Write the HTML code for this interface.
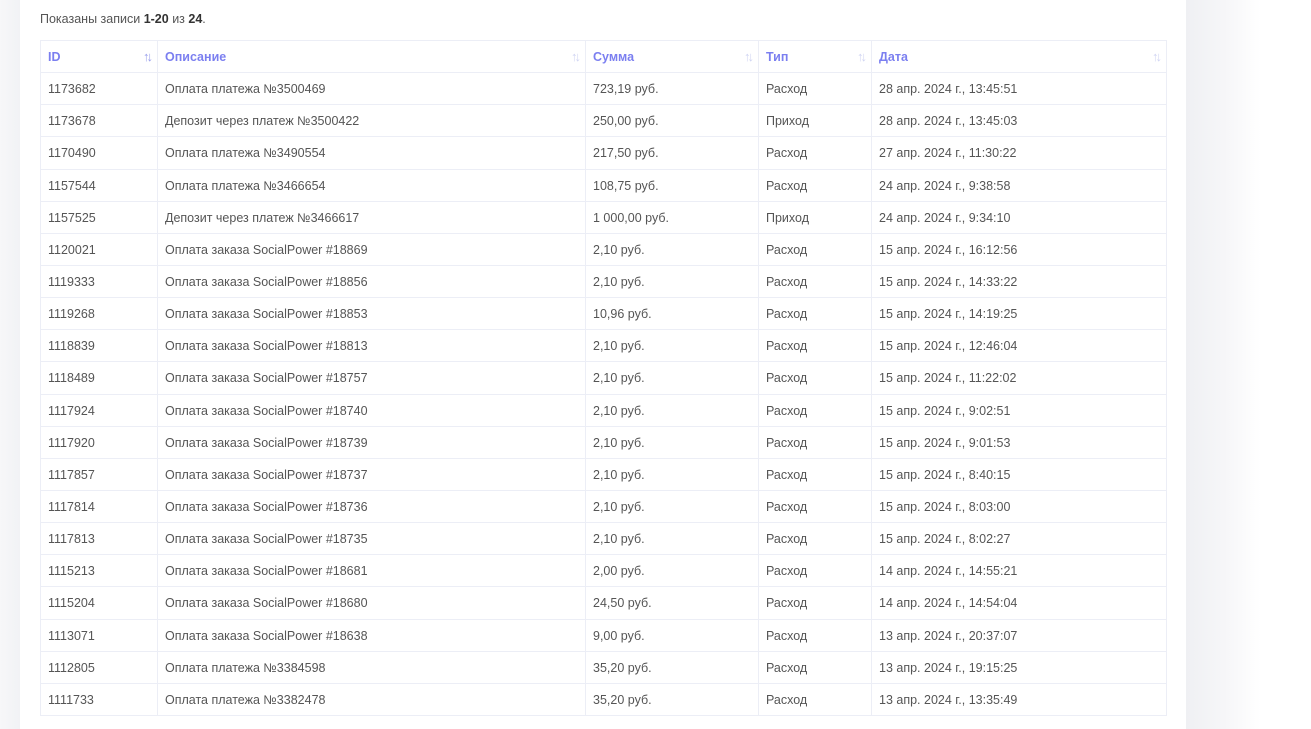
<!DOCTYPE html>
<html><head><meta charset="utf-8"><style>
html,body{margin:0;padding:0;width:1311px;height:729px;overflow:hidden;background:#fff;font-family:"Liberation Sans","DejaVu Sans",sans-serif;}
.bgl{position:absolute;left:0;top:0;width:20px;height:729px;background:linear-gradient(90deg,#f7f7f9,#f1f2f5);}
.bgr{position:absolute;left:1186px;top:0;width:125px;height:729px;background:linear-gradient(90deg,#eff0f3,#f6f6f8 30%,#fff 60%);}
.card{position:absolute;left:20px;top:0;width:1166px;height:729px;background:#fff;}
.info{position:absolute;left:40px;top:12px;font-size:12.5px;color:#555;}
.info b{color:#333;}
table{position:absolute;left:40px;top:40px;width:1126px;border-collapse:collapse;font-size:12.5px;color:#555;table-layout:fixed;}
td,th{border:1px solid #eceef6;height:32.15px;padding:1px 7px 0;text-align:left;white-space:nowrap;box-sizing:border-box;}
th{color:#7b7ff0;font-weight:bold;position:relative;}
th span{position:absolute;right:7px;top:8px;color:#d0d4f2;font-size:13px;font-weight:bold;letter-spacing:-3px;}
th span.a{color:#9aa0ec;}
</style></head><body>
<div class="bgl"></div><div class="bgr"></div>
<div class="card"></div>
<div class="info">Показаны записи <b>1-20</b> из <b>24</b>.</div>
<table>
<colgroup><col style="width:117px"><col style="width:428px"><col style="width:173px"><col style="width:113px"><col style="width:295px"></colgroup>
<tr><th>ID<span class="a">↑↓</span></th><th>Описание<span>↑↓</span></th><th>Сумма<span>↑↓</span></th><th>Тип<span>↑↓</span></th><th>Дата<span>↑↓</span></th></tr>
<tr><td>1173682</td><td>Оплата платежа №3500469</td><td>723,19 руб.</td><td>Расход</td><td>28 апр. 2024 г., 13:45:51</td></tr>
<tr><td>1173678</td><td>Депозит через платеж №3500422</td><td>250,00 руб.</td><td>Приход</td><td>28 апр. 2024 г., 13:45:03</td></tr>
<tr><td>1170490</td><td>Оплата платежа №3490554</td><td>217,50 руб.</td><td>Расход</td><td>27 апр. 2024 г., 11:30:22</td></tr>
<tr><td>1157544</td><td>Оплата платежа №3466654</td><td>108,75 руб.</td><td>Расход</td><td>24 апр. 2024 г., 9:38:58</td></tr>
<tr><td>1157525</td><td>Депозит через платеж №3466617</td><td>1 000,00 руб.</td><td>Приход</td><td>24 апр. 2024 г., 9:34:10</td></tr>
<tr><td>1120021</td><td>Оплата заказа SocialPower #18869</td><td>2,10 руб.</td><td>Расход</td><td>15 апр. 2024 г., 16:12:56</td></tr>
<tr><td>1119333</td><td>Оплата заказа SocialPower #18856</td><td>2,10 руб.</td><td>Расход</td><td>15 апр. 2024 г., 14:33:22</td></tr>
<tr><td>1119268</td><td>Оплата заказа SocialPower #18853</td><td>10,96 руб.</td><td>Расход</td><td>15 апр. 2024 г., 14:19:25</td></tr>
<tr><td>1118839</td><td>Оплата заказа SocialPower #18813</td><td>2,10 руб.</td><td>Расход</td><td>15 апр. 2024 г., 12:46:04</td></tr>
<tr><td>1118489</td><td>Оплата заказа SocialPower #18757</td><td>2,10 руб.</td><td>Расход</td><td>15 апр. 2024 г., 11:22:02</td></tr>
<tr><td>1117924</td><td>Оплата заказа SocialPower #18740</td><td>2,10 руб.</td><td>Расход</td><td>15 апр. 2024 г., 9:02:51</td></tr>
<tr><td>1117920</td><td>Оплата заказа SocialPower #18739</td><td>2,10 руб.</td><td>Расход</td><td>15 апр. 2024 г., 9:01:53</td></tr>
<tr><td>1117857</td><td>Оплата заказа SocialPower #18737</td><td>2,10 руб.</td><td>Расход</td><td>15 апр. 2024 г., 8:40:15</td></tr>
<tr><td>1117814</td><td>Оплата заказа SocialPower #18736</td><td>2,10 руб.</td><td>Расход</td><td>15 апр. 2024 г., 8:03:00</td></tr>
<tr><td>1117813</td><td>Оплата заказа SocialPower #18735</td><td>2,10 руб.</td><td>Расход</td><td>15 апр. 2024 г., 8:02:27</td></tr>
<tr><td>1115213</td><td>Оплата заказа SocialPower #18681</td><td>2,00 руб.</td><td>Расход</td><td>14 апр. 2024 г., 14:55:21</td></tr>
<tr><td>1115204</td><td>Оплата заказа SocialPower #18680</td><td>24,50 руб.</td><td>Расход</td><td>14 апр. 2024 г., 14:54:04</td></tr>
<tr><td>1113071</td><td>Оплата заказа SocialPower #18638</td><td>9,00 руб.</td><td>Расход</td><td>13 апр. 2024 г., 20:37:07</td></tr>
<tr><td>1112805</td><td>Оплата платежа №3384598</td><td>35,20 руб.</td><td>Расход</td><td>13 апр. 2024 г., 19:15:25</td></tr>
<tr><td>1111733</td><td>Оплата платежа №3382478</td><td>35,20 руб.</td><td>Расход</td><td>13 апр. 2024 г., 13:35:49</td></tr>
</table>
</body></html>
